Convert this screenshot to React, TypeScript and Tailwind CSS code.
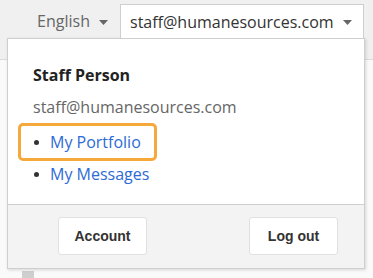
const Caret = ({ color }: { color: string }) => (
  <svg width="9" height="5" viewBox="0 0 9 5" className="ml-[9px] mt-[2px]">
    <path d="M0 0 L9 0 L4.5 5 Z" fill={color} />
  </svg>
);

export default function App() {
  return (
    <div className="relative w-[373px] h-[278px] overflow-hidden bg-[#f0f0f0] font-['Open_Sans',sans-serif]">
      {/* page behind the menu */}
      <div className="absolute left-0 right-0 top-[59px] bottom-0 border-t border-[#dcdcdc] bg-[#fafafa]">
        <div className="absolute left-[22px] top-[211px] w-[12px] h-[20px] bg-[#cfcfcf]" />
      </div>

      {/* top nav */}
      <div className="relative flex h-[38px] items-end justify-end pr-[9px]">
        <div className="flex h-[34px] items-center pr-[12px] text-[16px] text-[#666]">
          English
          <Caret color="#666" />
        </div>
        <div className="z-20 flex h-[34px] w-[244px] items-center border border-b-0 border-[#cfcfcf] bg-white pl-[9px] text-[16px] text-[#333]">
          staff@humanesources.com
          <Caret color="#666" />
        </div>
      </div>

      {/* dropdown panel */}
      <div className="absolute left-[7px] top-[38px] z-10 w-[358px] border border-[#cfcfcf] bg-white shadow-[1px_1px_3px_rgba(0,0,0,0.15)]">
        <div className="pt-[20px] pb-[14px] pl-[25px] text-[16px]">
          <div className="flex h-[32px] items-center font-bold text-[#222]">Staff Person</div>
          <div className="flex h-[32px] items-center text-[#666]">staff@humanesources.com</div>
          <ul className="mt-[3px] -ml-[12px]">
            <li className="flex h-[32px] w-[133px] items-center rounded-[2px] outline-[3px] outline-solid outline-[#f5a93a]">
              <span className="ml-[13px] h-[5px] w-[5px] rounded-full bg-[#333]" />
              <a className="ml-[11px] text-[#2d6bd6]">My Portfolio</a>
            </li>
            <li className="flex h-[32px] items-center">
              <span className="ml-[13px] h-[5px] w-[5px] rounded-full bg-[#333]" />
              <a className="ml-[11px] text-[#2d6bd6]">My Messages</a>
            </li>
          </ul>
        </div>
        <div className="flex h-[64px] items-start justify-between border-t border-[#cfcfcf] bg-[#f3f3f3] pt-[12px] pl-[50px] pr-[26px] font-['Liberation_Sans',sans-serif]">
          <button className="h-[38px] w-[89px] rounded-[3px] border border-[#e0e0e0] bg-white text-[14px] font-bold text-[#333]">
            Account
          </button>
          <button className="h-[38px] w-[89px] rounded-[3px] border border-[#e0e0e0] bg-white text-[14px] font-bold text-[#333]">
            Log out
          </button>
        </div>
      </div>
    </div>
  );
}
